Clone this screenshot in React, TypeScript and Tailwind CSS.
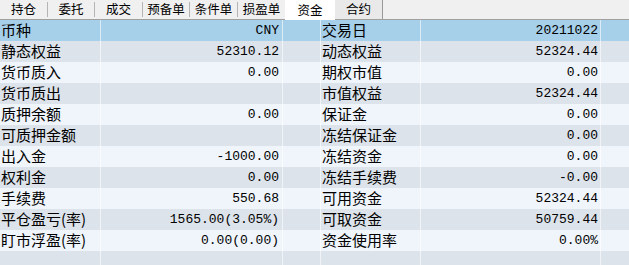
import React from "react";

const tabs: { name: string; w: string; active?: boolean; last?: boolean }[] = [
  { name: "持仓", w: "w-[48px]" },
  { name: "委托", w: "w-[47px]" },
  { name: "成交", w: "w-[48px]" },
  { name: "预备单", w: "w-[47px]" },
  { name: "条件单", w: "w-[48px]" },
  { name: "损盈单", w: "w-[47px]" },
  { name: "资金", w: "w-[50px]", active: true },
  { name: "合约", w: "w-[48px]", last: true },
];

const rows: [string, string, string, string][] = [
  ["币种", "CNY", "交易日", "20211022"],
  ["静态权益", "52310.12", "动态权益", "52324.44"],
  ["货币质入", "0.00", "期权市值", "0.00"],
  ["货币质出", "", "市值权益", "52324.44"],
  ["质押余额", "0.00", "保证金", "0.00"],
  ["可质押金额", "", "冻结保证金", "0.00"],
  ["出入金", "-1000.00", "冻结资金", "0.00"],
  ["权利金", "0.00", "冻结手续费", "-0.00"],
  ["手续费", "550.68", "可用资金", "52324.44"],
  ["平仓盈亏(率)", "1565.00(3.05%)", "可取资金", "50759.44"],
  ["盯市浮盈(率)", "0.00(0.00)", "资金使用率", "0.00%"],
  ["", "", "", ""],
];

const cjk = { fontFamily: '"Noto Sans CJK SC", "Noto Sans", sans-serif' };
const mono = { fontFamily: '"Liberation Mono", "Noto Sans CJK SC", monospace' };

export default function App() {
  return (
    <div className="w-[629px] h-[265px] overflow-hidden bg-[#f0f0f0] text-black">
      <div className="flex h-[20px] border-b border-[#a0a0a0] bg-[#f0f0f0]" style={cjk}>
        {tabs.map((t, i) => (
          <div
            key={t.name}
            className={
              "flex items-center justify-center text-[12.5px] leading-none " +
              t.w +
              (t.active
                ? " bg-white h-[20px] -mb-px"
                : t.last
                ? " bg-[#e9e9e9] border-r border-[#9a9a9a]"
                : i < 5
                ? " border-r border-[#b4b4b4] my-[2px] h-[15px] self-center"
                : "")
            }
          >
            {t.name}
          </div>
        ))}
      </div>
      <div className="grid grid-cols-[100px_182px_38px_100px_180px_29px]">
        {rows.map((r, i) => {
          const bg = i === 0 ? "bg-[#a6cfe9]" : i % 2 === 1 ? "bg-[#dde3ea]" : "bg-[#eff5fb]";
          const cell = "h-[21px] flex items-center " + bg;
          const line = " border-l border-white/60";
          return (
            <React.Fragment key={i}>
              <div className={cell + " pl-[1px] text-[15px] whitespace-nowrap"} style={cjk}>{r[0]}</div>
              <div className={cell + line + " justify-end pr-[3px] text-[13px]"} style={mono}>{r[1]}</div>
              <div className={cell + line}></div>
              <div className={cell + line + " pl-[1px] text-[15px] whitespace-nowrap"} style={cjk}>{r[2]}</div>
              <div className={cell + line + " justify-end pr-[2px] text-[13px]"} style={mono}>{r[3]}</div>
              <div className={cell + line}></div>
            </React.Fragment>
          );
        })}
      </div>
    </div>
  );
}
